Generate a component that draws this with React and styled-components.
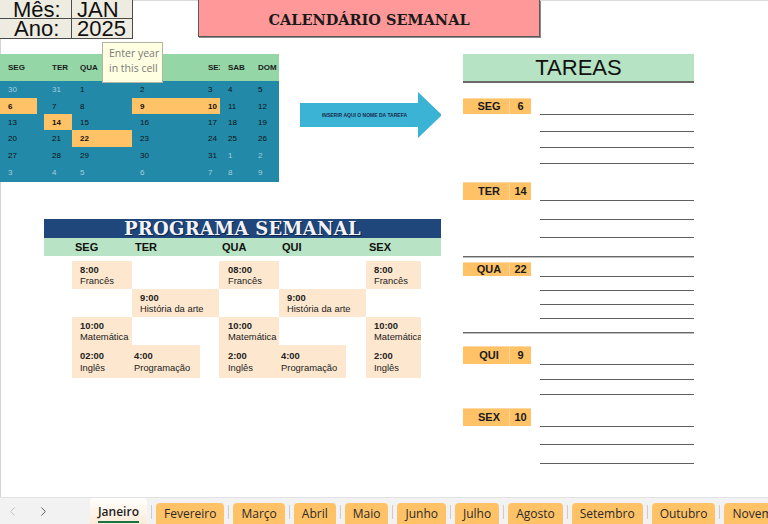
import React from 'react';
import styled, { createGlobalStyle } from 'styled-components';
import { ChevronLeft, ChevronRight } from 'lucide-react';

const GlobalStyle = createGlobalStyle`
  html, body { margin: 0; padding: 0; background: #fff; }
  body { font-family: "Liberation Sans", Arial, sans-serif; }
`;

const Page = styled.div`
  width: 768px;
  height: 524px;
  display: flex;
  flex-direction: column;
  overflow: hidden;
  background: #fff;
`;

const Sheet = styled.div`
  position: relative;
  flex: 1;
  overflow: hidden;
  box-shadow: inset 1px 0 0 #d4d4d4, inset 0 1px 0 #dadada;
`;

const TopRow = styled.div`
  display: flex;
  align-items: flex-start;
  height: 38px;
`;

const MonthBox = styled.div`
  width: 133px;
  box-sizing: border-box;
  display: grid;
  grid-template-columns: 72px 60px;
  grid-template-rows: 19px 19px;
  background: #eeece1;
  border-right: 1px solid #4a4a4a;
  border-bottom: 1px solid #4a4a4a;
`;

const MonthCell = styled.div`
  font-size: 22px;
  line-height: 19px;
  color: #111;
  overflow: hidden;
  white-space: nowrap;
  padding-left: ${p => p.$pad}px;
  border-right: ${p => (p.$label ? '1px solid #4a4a4a' : 'none')};
  border-bottom: ${p => (p.$first ? '1px solid #4a4a4a' : 'none')};
`;

const TitleBox = styled.div`
  margin-left: 65px;
  width: 342px;
  height: 37px;
  box-sizing: border-box;
  padding-top: 3px;
  background: #ff9999;
  border: 1px solid #5a5a5a;
  border-top: none;
  box-shadow: 1px 1px 0 #8a8a8a;
  display: flex;
  align-items: center;
  justify-content: center;
  font-family: "DejaVu Serif", serif;
  font-weight: bold;
  font-size: 14.5px;
  color: #1a1a1a;
`;

const MainRow = styled.div`
  display: flex;
  align-items: flex-start;
  margin-top: 16px;
`;

const LeftCol = styled.div`
  width: 441px;
  display: flex;
  flex-direction: column;
`;

const CalRow = styled.div`
  display: flex;
  align-items: flex-start;
`;

const Calendar = styled.div`
  width: 279px;
  display: grid;
  grid-template-columns: 37px 7px 28px 60px 68px 20px 30px 29px;
  grid-template-rows: 27px 17px 16px 16px 17px 16px 19px;
  background: #2389a8;
`;

const CalHead = styled.div`
  display: flex;
  align-items: center;
  padding-left: 8px;
  overflow: hidden;
  white-space: nowrap;
  background: #94d6a6;
  font-size: 8px;
  font-weight: bold;
  color: #1c1c1c;
`;

const CalDay = styled.div`
  display: flex;
  align-items: center;
  padding-left: 8px;
  overflow: hidden;
  font-size: 8px;
  font-weight: ${p => (p.$hl ? 'bold' : 'normal')};
  color: ${p => (p.$dim ? '#a3cfdc' : '#111')};
  background: ${p => (p.$hl ? '#ffc266' : 'transparent')};
`;

const Arrow = styled.div`
  margin: 38px 0 0 21px;
  width: 142px;
  height: 46px;
  box-sizing: border-box;
  padding-right: 12px;
  background: #3bb3d5;
  clip-path: polygon(0 11px, 118px 11px, 118px 0, 142px 23px, 118px 46px, 118px 35px, 0 35px);
  display: flex;
  align-items: center;
  justify-content: center;
  font-size: 5px;
  font-weight: bold;
  color: #1b2b4b;
  white-space: nowrap;
`;

const Tooltip = styled.div`
  position: absolute;
  left: 102px;
  top: 42px;
  width: 61px;
  height: 41px;
  box-sizing: border-box;
  padding: 3px 0 0 6px;
  background: #ffffe1;
  border: 1px solid #b4b4a4;
  font-family: "Open Sans", sans-serif;
  font-size: 10.5px;
  line-height: 15px;
  color: #7a7a7a;
`;

const PROG_COLS = '28px 60px 68px 19px 60px 67px 20px 55px 20px';

const Program = styled.section`
  margin: 37px 0 0 44px;
  width: 397px;
`;

const ProgTitle = styled.div`
  height: 19px;
  background: #1f477b;
  text-align: center;
  font-family: "DejaVu Serif", serif;
  font-weight: bold;
  font-size: 18px;
  line-height: 20px;
  letter-spacing: 0.3px;
  color: #f3f3f8;
  text-shadow: 1px 1px 0 #0d2447;
`;

const ProgHead = styled.div`
  height: 18px;
  display: grid;
  grid-template-columns: ${PROG_COLS};
  align-items: center;
  background: #b8e3c4;
  font-size: 11px;
  font-weight: bold;
  color: #111;
`;

const ProgDay = styled.span`
  grid-column: ${p => p.$col};
  padding-left: 3px;
`;

const ProgGrid = styled.div`
  margin-top: 5px;
  display: grid;
  grid-template-columns: ${PROG_COLS};
  grid-template-rows: 28px 28px 28px 33px;
`;

const Lesson = styled.div`
  grid-column: ${p => p.$col} / span ${p => p.$span || 1};
  grid-row: ${p => p.$row};
  display: flex;
  flex-direction: column;
  justify-content: center;
  padding-left: ${p => p.$pad || 8}px;
  background: #fde8cf;
  font-size: 9.4px;
  line-height: 11.5px;
  color: #222;
  white-space: nowrap;
  overflow: hidden;
  b { font-weight: bold; }
`;

const Tareas = styled.section`
  margin-left: 22px;
  width: 231px;
`;

const TareasHead = styled.div`
  height: 27px;
  background: #b5e3c3;
  border-bottom: 2px solid #6a6a6a;
  text-align: center;
  font-size: 22px;
  line-height: 27px;
  color: #111;
`;

const TaskGroup = styled.div`
  margin-top: ${p => p.$top}px;
`;

const TaskRow = styled.div`
  height: ${p => p.$h}px;
  display: grid;
  grid-template-columns: 68px 1fr;
  column-gap: 9px;
  align-items: start;
`;

const Rule = styled.div`
  height: 100%;
  box-sizing: border-box;
  border-bottom: 1px solid #5f5f5f;
`;

const DayTag = styled.div`
  height: ${p => p.$h}px;
  display: grid;
  grid-template-columns: 46px 22px;
  align-items: center;
  background: #ffc266;
  box-shadow: inset 0 1px 0 #ffd9a3;
  font-size: 11px;
  font-weight: bold;
  color: #1a1a1a;
  span { text-align: center; padding-left: 6px; }
  em {
    font-style: normal;
    align-self: stretch;
    display: flex;
    align-items: center;
    justify-content: center;
    border-left: 1px solid #ffd49a;
  }
`;

const Divider = styled.div`
  margin-top: ${p => p.$top}px;
  height: 2px;
  background: linear-gradient(#686868 50%, #bdbdbd 50%);
`;

const TabBar = styled.div`
  height: 27px;
  flex-shrink: 0;
  display: flex;
  align-items: flex-end;
  overflow: hidden;
  background: #f2f2f2;
  border-top: 1px solid #e2e2e2;
  box-sizing: border-box;
  font-family: "Open Sans", sans-serif;
  font-size: 12px;
`;

const Nav = styled.div`
  width: 90px;
  flex-shrink: 0;
  height: 100%;
  display: flex;
  align-items: center;
  gap: 16px;
  padding-left: 5px;
  box-sizing: border-box;
`;

const NavBtn = styled.span`
  display: flex;
  color: ${p => (p.$off ? '#b9b9b9' : '#4a4a4a')};
`;

const ActiveTab = styled.div`
  width: 57px;
  height: 26px;
  flex-shrink: 0;
  box-sizing: border-box;
  border-radius: 4px 4px 0 0;
  background: linear-gradient(#ffffff, #fdebd6);
  display: flex;
  justify-content: center;
  padding-top: 6px;
  span {
    height: 17px;
    font-weight: 600;
    color: #1e1e1e;
    border-bottom: 2px solid #1e7145;
    line-height: 16px;
  }
`;

const Sep = styled.span`
  width: 1px;
  height: 14px;
  flex-shrink: 0;
  margin: 0 4px 5px;
  background: #cdcdcd;
`;

const Tab = styled.div`
  height: 21px;
  flex-shrink: 0;
  padding: 0 8px;
  border-radius: 4px 4px 0 0;
  background: #ffc266;
  line-height: 21px;
  color: #2a2a2a;
  white-space: nowrap;
`;

const weeks = [
  [['30', 'dim'], ['31', 'dim'], ['1'], ['2'], ['3'], ['4'], ['5']],
  [['6', 'hl'], ['7'], ['8'], ['9', 'hl'], ['10', 'hl'], ['11'], ['12']],
  [['13'], ['14', 'hl'], ['15'], ['16'], ['17'], ['18'], ['19']],
  [['20'], ['21'], ['22', 'hl'], ['23'], ['24'], ['25'], ['26']],
  [['27'], ['28'], ['29'], ['30'], ['31'], ['1', 'dim'], ['2', 'dim']],
  [['3', 'dim'], ['4', 'dim'], ['5', 'dim'], ['6', 'dim'], ['7', 'dim'], ['8', 'dim'], ['9', 'dim']],
];

const lessons = [
  { row: 1, col: 2, time: '8:00', name: 'Francês' },
  { row: 1, col: 5, time: '08:00', name: 'Francês', pad: 9 },
  { row: 1, col: 8, time: '8:00', name: 'Francês' },
  { row: 2, col: 3, span: 2, time: '9:00', name: 'História da arte' },
  { row: 2, col: 6, span: 2, time: '9:00', name: 'História da arte' },
  { row: 3, col: 2, time: '10:00', name: 'Matemática' },
  { row: 3, col: 5, time: '10:00', name: 'Matemática', pad: 9 },
  { row: 3, col: 8, time: '10:00', name: 'Matemática' },
  { row: 4, col: 2, time: '02:00', name: 'Inglês' },
  { row: 4, col: 3, time: '4:00', name: 'Programação', pad: 2 },
  { row: 4, col: 5, time: '2:00', name: 'Inglês', pad: 9 },
  { row: 4, col: 6, time: '4:00', name: 'Programação', pad: 2 },
  { row: 4, col: 8, time: '2:00', name: 'Inglês' },
];

const tasks = [
  { day: 'SEG', num: '6', top: 15, rows: [17, 17, 16, 16] },
  { day: 'TER', num: '14', top: 18, rows: [19, 19, 18], divider: 18 },
  { day: 'QUA', num: '22', top: 4, rows: [15, 14, 14, 14], divider: 13 },
  { day: 'QUI', num: '9', top: 12, rows: [19, 15, 15] },
  { day: 'SEX', num: '10', top: 13, rows: [19, 18, 19] },
];

const sheets = ['Fevereiro', 'Março', 'Abril', 'Maio', 'Junho', 'Julho', 'Agosto', 'Setembro', 'Outubro', 'Novembro', 'Dezembro'];

const heads = ['SEG', '', 'TER', 'QUA', 'QUI', 'SEX', 'SAB', 'DOM'];

function TaskBlock({ task }) {
  const [first, ...rest] = task.rows;
  return (
    <>
      <TaskGroup $top={task.top}>
        <TaskRow $h={first}>
          <DayTag $h={first - 1}>
            <span>{task.day}</span>
            <em>{task.num}</em>
          </DayTag>
          <Rule />
        </TaskRow>
        {rest.map((h, i) => (
          <TaskRow key={i} $h={h}>
            <span />
            <Rule />
          </TaskRow>
        ))}
      </TaskGroup>
      {task.divider && <Divider $top={task.divider} />}
    </>
  );
}

export default function App() {
  return (
    <Page>
      <GlobalStyle />
      <Sheet>
        <TopRow>
          <MonthBox>
            <MonthCell $label $first $pad={13}>Mês:</MonthCell>
            <MonthCell $first $pad={5}>JAN</MonthCell>
            <MonthCell $label $pad={14}>Ano:</MonthCell>
            <MonthCell $pad={5}>2025</MonthCell>
          </MonthBox>
          <TitleBox>CALENDÁRIO SEMANAL</TitleBox>
        </TopRow>

        <MainRow>
          <LeftCol>
            <CalRow>
              <Calendar>
                {heads.map((h, i) => <CalHead key={i}>{h}</CalHead>)}
                {weeks.map((week, w) =>
                  week.flatMap(([n, kind], d) => {
                    const cell = (
                      <CalDay key={`${w}-${d}`} $hl={kind === 'hl'} $dim={kind === 'dim'}>
                        {n}
                      </CalDay>
                    );
                    return d === 0 ? [cell, <CalDay key={`${w}-gap`} />] : [cell];
                  })
                )}
              </Calendar>
              <Arrow>INSERIR AQUI O NOME DA TAREFA</Arrow>
            </CalRow>

            <Program>
              <ProgTitle>PROGRAMA SEMANAL</ProgTitle>
              <ProgHead>
                <ProgDay $col={2}>SEG</ProgDay>
                <ProgDay $col={3}>TER</ProgDay>
                <ProgDay $col={5}>QUA</ProgDay>
                <ProgDay $col={6}>QUI</ProgDay>
                <ProgDay $col={8}>SEX</ProgDay>
              </ProgHead>
              <ProgGrid>
                {lessons.map((l, i) => (
                  <Lesson key={i} $row={l.row} $col={l.col} $span={l.span} $pad={l.pad}>
                    <b>{l.time}</b>
                    <span>{l.name}</span>
                  </Lesson>
                ))}
              </ProgGrid>
            </Program>
          </LeftCol>

          <Tareas>
            <TareasHead>TAREAS</TareasHead>
            {tasks.map(t => <TaskBlock key={t.day} task={t} />)}
          </Tareas>
        </MainRow>

        <Tooltip>
          Enter year
          <br />
          in this cell
        </Tooltip>
      </Sheet>

      <TabBar>
        <Nav>
          <NavBtn $off><ChevronLeft size={15} strokeWidth={1.4} /></NavBtn>
          <NavBtn><ChevronRight size={15} strokeWidth={1.4} /></NavBtn>
        </Nav>
        <ActiveTab><span>Janeiro</span></ActiveTab>
        {sheets.map(s => (
          <React.Fragment key={s}>
            <Sep />
            <Tab>{s}</Tab>
          </React.Fragment>
        ))}
      </TabBar>
    </Page>
  );
}
